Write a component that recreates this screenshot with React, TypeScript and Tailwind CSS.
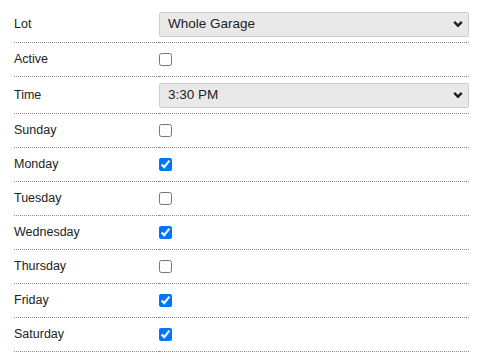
import React from 'react';

const days: { name: string; checked: boolean }[] = [
  { name: 'Sunday', checked: false },
  { name: 'Monday', checked: true },
  { name: 'Tuesday', checked: false },
  { name: 'Wednesday', checked: true },
  { name: 'Thursday', checked: false },
  { name: 'Friday', checked: true },
  { name: 'Saturday', checked: true },
];

const Chevron = () => (
  <svg className="absolute right-[6px] top-1/2 -translate-y-1/2 pointer-events-none" width="10" height="7" viewBox="0 0 10 7">
    <path d="M1.2 1.4 L5 5.2 L8.8 1.4" fill="none" stroke="#1f1f1f" strokeWidth="2.4" />
  </svg>
);

const Select = ({ value, options }: { value: string; options: string[] }) => (
  <div className="relative w-[310px]">
    <select
      defaultValue={value}
      className="appearance-none w-full h-[25px] pl-[8px] pr-6 bg-[#e9e9e9] border border-[#cdcdcd] rounded-[2px] text-[13.5px] text-[#222] font-['Liberation_Sans',Arial,sans-serif] outline-none"
    >
      {options.map((o) => (
        <option key={o}>{o}</option>
      ))}
    </select>
    <Chevron />
  </div>
);

const Row = ({ label, tall, children }: { label: string; tall?: boolean; children: React.ReactNode }) => (
  <div className={`flex ${tall ? 'h-[37px]' : 'h-[34px]'}`}>
    <div className="w-[145px] flex items-center border-b border-dotted border-[#8a8a8a] text-[12.5px] text-[#222]">
      {label}
    </div>
    <div className="flex-1 flex items-center border-b border-dotted border-[#8a8a8a]">{children}</div>
  </div>
);

export default function App() {
  return (
    <div className="w-[481px] h-[356px] bg-white pt-[6px] pl-[14px] font-['Liberation_Sans',Arial,sans-serif]">
      <div className="w-[455px]">
        <Row label="Lot" tall>
          <Select value="Whole Garage" options={['Whole Garage', 'Level 1', 'Level 2']} />
        </Row>
        <Row label="Active">
          <input type="checkbox" className="w-[13px] h-[13px]" />
        </Row>
        <Row label="Time" tall>
          <Select value="3:30 PM" options={['3:00 PM', '3:30 PM', '4:00 PM']} />
        </Row>
        {days.map((d) => (
          <Row key={d.name} label={d.name}>
            <input type="checkbox" defaultChecked={d.checked} className="w-[13px] h-[13px]" />
          </Row>
        ))}
      </div>
    </div>
  );
}
